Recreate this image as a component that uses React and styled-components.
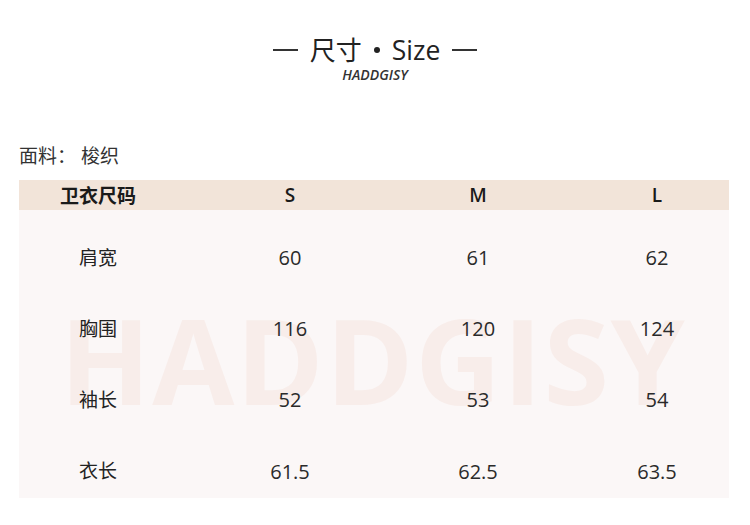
import React from 'react'
import styled, { createGlobalStyle } from 'styled-components'

const Global = createGlobalStyle`
body {
  margin: 0;
  background: #fff;
  font-family: "Open Sans", "Noto Sans CJK SC", sans-serif;
  color: #222;
}
`
const Page = styled.div`
width: 750px;
height: 525px;
padding: 35px 19px 0;
box-sizing: border-box;
display: flex;
flex-direction: column;
`
const Heading = styled.div`
display: flex;
flex-direction: column;
align-items: center;
`
const Title = styled.div`
display: flex;
align-items: center;
gap: 12px;
font-size: 26px;
line-height: 30px;
color: #222;
`
const Dash = styled.span`
width: 25px;
height: 1.5px;
background: #333;
`
const Latin = styled.span`
font-size: 26.5px;
`
const Dot = styled.span`
width: 6px;
height: 6px;
border-radius: 50%;
background: #222;
`
const Sub = styled.div`
font-size: 14px;
font-style: italic;
font-weight: 600;
color: #333;
`
const Fabric = styled.div`
margin-top: 60px;
font-size: 19px;
line-height: 24px;
color: #333;
`
const Table = styled.div`
margin-top: 12px;
width: 710px;
`
const HeadRow = styled.div`
display: grid;
grid-template-columns: 158px 226px 150px 1fr;
height: 30px;
align-items: center;
background: #f2e4d9;
font-size: 19px;
font-weight: 600;
color: #1a1a1a;
& > span { text-align: center; }
& > span:last-child { padding-left: 32px; }
`
const Body = styled.div`
position: relative;
height: 288px;
overflow: hidden;
background: #fbf7f7;
padding-top: 11px;
box-sizing: border-box;
`
const Watermark = styled.div`
position: absolute;
left: 0;
right: 0;
top: 84px;
text-align: center;
font-family: "Open Sans", sans-serif;
font-weight: 700;
font-size: 119px;
line-height: 130px;
letter-spacing: 1.5px;
color: #f8edea;
padding-right: 2px;
`
const Row = styled.div`
position: relative;
display: grid;
grid-template-columns: 158px 226px 150px 1fr;
height: 71px;
align-items: center;
color: #222;
& > span { text-align: center; }
& > span:last-child { padding-left: 32px; }
`
const Label = styled.span`
font-size: 19px;
`
const Num = styled.span`
font-size: 20px;
font-weight: 400;
color: #2a2a2a;
transform: translateY(${p => p.$dy || 0}px);
`

const rows = [
  ['肩宽', '60', '61', '62'],
  ['胸围', '116', '120', '124'],
  ['袖长', '52', '53', '54'],
  ['衣长', '61.5', '62.5', '63.5'],
]

export default function App() {
  return (
    <Page>
      <Global />
      <Heading>
        <Title>
          <Dash />
          <span>尺寸</span>
          <Dot />
          <Latin>Size</Latin>
          <Dash />
        </Title>
        <Sub>HADDGISY</Sub>
      </Heading>
      <Fabric>面料：&nbsp;梭织</Fabric>
      <Table>
        <HeadRow>
          <span>卫衣尺码</span>
          <span>S</span>
          <span>M</span>
          <span>L</span>
        </HeadRow>
        <Body>
          <Watermark>HADDGISY</Watermark>
          {rows.map((r, i) => (
            <Row key={r[0]}>
              <Label>{r[0]}</Label>
              <Num $dy={i === 3 ? 2 : 1}>{r[1]}</Num>
              <Num $dy={i === 3 ? 2 : 1}>{r[2]}</Num>
              <Num $dy={i === 3 ? 2 : 1}>{r[3]}</Num>
            </Row>
          ))}
        </Body>
      </Table>
    </Page>
  )
}
